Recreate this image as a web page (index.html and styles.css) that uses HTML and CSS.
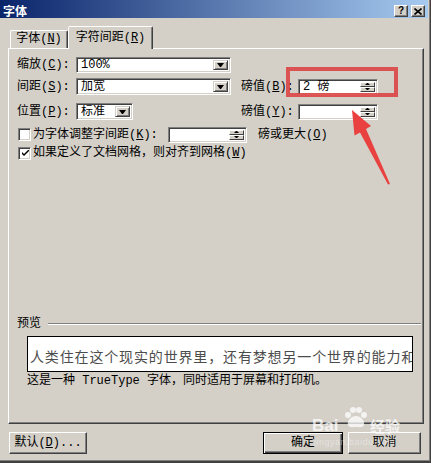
FILE: index.html
```html
<!DOCTYPE html>
<html lang="zh-CN">
<head>
  <meta charset="UTF-8" />
  <title>字体</title>
  <link rel="stylesheet" href="styles.css">
</head>
<body>
  <div class="dialog">
    <div class="titlebar">
      <span class="title">字体</span>
      <div class="caption-btns">
        <span class="cap-btn help">?</span>
        <span class="cap-btn close">
          <svg width="8" height="7" viewBox="0 0 8 7"><path d="M0.5 0.5 L7.5 6.5 M7.5 0.5 L0.5 6.5" stroke="#000" stroke-width="1.6"/></svg>
        </span>
      </div>
    </div>

    <div class="tabs">
      <div class="tab tab-font">字体(<u>N</u>)</div>
      <div class="tab active">字符间距(<u>R</u>)</div>
    </div>

    <div class="panel">
      <!-- scale -->
      <div class="row r1">
        <span class="lbl">缩放(<u>C</u>):</span>
        <div class="combo wide"><span class="val">100%</span><span class="drop"></span></div>
      </div>

      <!-- spacing -->
      <div class="row r2">
        <span class="lbl">间距(<u>S</u>):</span>
        <div class="cell">
          <div class="combo wide"><span class="val">加宽</span><span class="drop"></span></div>
        </div>
        <span class="lbl2">磅值(<u>B</u>):</span>
        <div class="spin"><span class="val">2 磅</span><span class="spin-btns"><span class="sb up"></span><span class="sb down"></span></span></div>
      </div>

      <!-- position -->
      <div class="row r3">
        <span class="lbl">位置(<u>P</u>):</span>
        <div class="cell">
          <div class="combo narrow"><span class="val">标准</span><span class="drop"></span></div>
        </div>
        <span class="lbl2">磅值(<u>Y</u>):</span>
        <div class="spin"><span class="val"></span><span class="spin-btns"><span class="sb up"></span><span class="sb down"></span></span></div>
      </div>

      <!-- kerning -->
      <div class="row r4">
        <span class="chk"></span>
        <span class="chk-lbl">为字体调整字间距(<u>K</u>):</span>
        <div class="spin small"><span class="val"></span><span class="spin-btns"><span class="sb up"></span><span class="sb down"></span></span></div>
        <span class="after">磅或更大(<u>O</u>)</span>
      </div>

      <!-- snap to grid -->
      <div class="row r5">
        <span class="chk checked">
          <svg width="7" height="7" viewBox="0 0 7 7"><path d="M0 2 L0 4 L2 6 L7 1 L7 -1 L2 4 Z" fill="#000"/></svg>
        </span>
        <span class="chk-lbl long">如果定义了文档网格，则对齐到网格(<u>W</u>)</span>
      </div>

      <div class="preview">
        <div class="legend">预览</div>
        <div class="pv-box">人类住在这个现实的世界里，还有梦想另一个世界的能力和</div>
        <div class="pv-desc">这是一种 TrueType 字体，同时适用于屏幕和打印机。</div>
      </div>
    </div>

    <div class="footer">
      <span class="btn btn-default">默认(<u>D</u>)...</span>
      <span class="btn btn-ok">确定</span>
      <span class="btn btn-cancel">取消</span>
    </div>

    <!-- annotation overlay -->
    <div class="redbox"></div>
    <svg class="arrow" width="431" height="463" viewBox="0 0 431 463">
      <polygon points="352,110 371,126 366,129 390,184 388,184.5 360,132.5 354.5,135.5" fill="#e8413f"/>
    </svg>

    <div class="watermark">
      <span class="wm-bai">Bai</span>
      <svg class="paw" width="24" height="22" viewBox="0 0 24 22">
        <circle cx="5" cy="8" r="3"/><circle cx="10" cy="3" r="3"/><circle cx="16" cy="3" r="3"/><circle cx="21" cy="8" r="3"/>
        <path d="M13 9 C7 9 4 15 5 18 C6 21 10 20 13 20 C16 20 20 21 21 18 C22 15 19 9 13 9 Z"/>
      </svg>
      <span class="wm-jy">经验</span>
      <span class="wm-url">jingyan.baidu.com</span>
    </div>
  </div>
</body>
</html>
```

FILE: styles.css
```css
:root {
  --face: #d4d0c8;
  --light: #ffffff;
  --shadow: #808080;
  --dark: #404040;
  --ui-font: "Liberation Mono", "Noto Sans CJK SC", monospace;
}
body {
  margin: 0;
  background: var(--face);
  font-family: var(--ui-font);
  font-size: 12px;
  line-height: 14px;
  color: #000;
}
u {
  text-decoration: underline;
  text-underline-offset: 1px;
}
.dialog {
  position: relative;
  width: 431px;
  height: 463px;
  box-sizing: border-box;
  padding-right: 2px;
  border-right: 1px solid var(--dark);
  border-bottom: 2px solid var(--dark);
  box-shadow: inset -1px -1px var(--shadow);
  overflow: hidden;
}

/* title bar */
.titlebar {
  height: 18px;
  box-sizing: border-box;
  padding: 5px 3px 1px 3px;
  display: flex;
  align-items: center;
  justify-content: space-between;
  background: linear-gradient(90deg, #0a246a, #a6caf0);
}
.title {
  color: #fff;
  font-family: "Noto Sans CJK SC", sans-serif;
  font-weight: 700;
  font-size: 12px;
  line-height: 12px;
}
.caption-btns {
  display: flex;
  gap: 3px;
}
.cap-btn {
  width: 14px;
  height: 12px;
  box-sizing: border-box;
  background: var(--face);
  border: 1px solid;
  border-color: var(--light) var(--dark) var(--dark) var(--light);
  box-shadow: inset -1px -1px var(--shadow);
  display: flex;
  align-items: center;
  justify-content: center;
  font-family: "Liberation Sans", sans-serif;
  font-weight: 700;
  font-size: 10px;
  line-height: 10px;
}

/* tabs */
.tabs {
  height: 22px;
  margin-top: 8px;
  padding-left: 10px;
  display: flex;
  align-items: flex-end;
}
.tab {
  height: 18px;
  box-sizing: border-box;
  border: 1px solid;
  border-bottom: none;
  border-color: var(--light) var(--dark) transparent var(--light);
  box-shadow: inset -1px 0 var(--shadow);
  border-radius: 2px 2px 0 0;
  text-align: center;
  line-height: 17px;
  white-space: nowrap;
}
.tab-font {
  width: 58px;
}
.tab.active {
  position: relative;
  z-index: 1;
  width: 85px;
  height: 23px;
  margin-bottom: -1px;
  padding-top: 3px;
  background: var(--face);
}

/* tab panel */
.panel {
  margin-left: 8px;
  width: 416px;
  height: 376px;
  box-sizing: border-box;
  border: 1px solid;
  border-color: var(--light) var(--dark) var(--dark) var(--light);
  box-shadow: inset -1px -1px var(--shadow);
  padding: 8px 2px 35px 8px;
  display: flex;
  flex-direction: column;
}
.row {
  display: flex;
  align-items: center;
  white-space: nowrap;
}
.r1 { height: 16px; }
.r2 { height: 17px; margin-top: 5px; }
.r3 { height: 17px; margin-top: 8px; }
.r4 { height: 17px; margin-top: 6px; }
.r5 { height: 14px; margin-top: 3px; }

.lbl {
  width: 59px;
  flex: none;
}
.cell {
  width: 165px;
  height: 100%;
  flex: none;
}
.lbl2 {
  width: 57px;
  flex: none;
}

/* combo boxes */
.combo {
  height: 100%;
  box-sizing: border-box;
  padding: 2px;
  display: flex;
  align-items: center;
  background: #fff;
  border: 1px solid;
  border-color: var(--shadow) var(--light) var(--light) var(--shadow);
  box-shadow: inset 1px 1px var(--dark), inset -1px -1px var(--face);
}
.combo.wide { width: 155px; }
.combo.narrow { width: 57px; }
.val {
  flex: 1;
  padding-left: 2px;
  overflow: hidden;
}
.drop {
  width: 15px;
  height: 100%;
  flex: none;
  box-sizing: border-box;
  background: var(--face);
  border: 1px solid;
  border-color: var(--face) var(--dark) var(--dark) var(--face);
  box-shadow: inset 1px 1px var(--light), inset -1px -1px var(--shadow);
  display: flex;
  align-items: center;
  justify-content: center;
}
.drop::after {
  content: "";
  width: 1px;
  height: 0;
  border-left: 3px solid transparent;
  border-right: 3px solid transparent;
  border-top: 4px solid #000;
}

/* spinners */
.spin {
  width: 80px;
  height: 16px;
  box-sizing: border-box;
  padding: 2px;
  display: flex;
  align-items: center;
  background: #fff;
  border: 1px solid;
  border-color: var(--shadow) var(--light) var(--light) var(--shadow);
  box-shadow: inset 1px 1px var(--dark), inset -1px -1px var(--face);
}
.spin.small {
  width: 79px;
}
.spin-btns {
  width: 15px;
  height: 100%;
  flex: none;
  display: flex;
  flex-direction: column;
}
.sb {
  flex: 1;
  box-sizing: border-box;
  background: var(--face);
  border: 1px solid;
  border-color: var(--light) var(--dark) var(--dark) var(--light);
  display: flex;
  align-items: center;
  justify-content: center;
}
.sb::after {
  content: "";
  width: 1px;
  height: 0;
  border-left: 2px solid transparent;
  border-right: 2px solid transparent;
}
.sb.up::after { border-bottom: 2px solid #000; }
.sb.down::after { border-top: 2px solid #000; }

/* checkboxes */
.chk {
  width: 13px;
  height: 13px;
  flex: none;
  margin: 0 2px 0 1px;
  box-sizing: border-box;
  background: #fff;
  border: 1px solid;
  border-color: var(--shadow) var(--light) var(--light) var(--shadow);
  box-shadow: inset 1px 1px var(--dark), inset -1px -1px var(--face);
  display: flex;
  align-items: center;
  justify-content: center;
}
.chk svg {
  margin: 1px 0 0 1px;
}
.chk-lbl {
  width: 135px;
  flex: none;
}
.chk-lbl.long {
  width: auto;
}
.after {
  margin-left: 11px;
}

/* preview */
.preview {
  margin-top: auto;
}
.legend {
  height: 14px;
  display: flex;
  align-items: center;
}
.legend::after {
  content: "";
  flex: 1;
  height: 0;
  margin-left: 7px;
  border-top: 1px solid var(--shadow);
  border-bottom: 1px solid var(--light);
}
.pv-box {
  margin: 5px 0 0 10px;
  width: 386px;
  height: 36px;
  box-sizing: border-box;
  padding: 3px 0 0 2px;
  display: flex;
  align-items: center;
  background: #fff;
  border: 1px solid #000;
  white-space: nowrap;
  overflow: hidden;
  font-family: "Noto Sans CJK SC", sans-serif;
  font-size: 14px;
  letter-spacing: 0.85px;
  color: #4c4c4c;
}
.pv-desc {
  margin: 2px 0 0 10px;
  height: 14px;
  white-space: nowrap;
}

/* buttons */
.footer {
  display: flex;
  padding: 8px 7px 0 9px;
}
.btn {
  height: 22px;
  box-sizing: border-box;
  background: var(--face);
  border: 1px solid;
  border-color: var(--light) var(--dark) var(--dark) var(--light);
  box-shadow: inset -1px -1px var(--shadow);
  display: flex;
  align-items: center;
  justify-content: center;
  white-space: nowrap;
}
.btn-default { width: 78px; }
.btn-ok {
  width: 80px;
  margin-left: auto;
  border-color: #000;
  box-shadow: inset 1px 1px var(--light), inset -1px -1px var(--dark), inset -2px -2px var(--shadow);
}
.btn-cancel {
  width: 73px;
  margin-left: 5px;
}

/* screenshot annotation */
.redbox {
  position: absolute;
  left: 286px;
  top: 67px;
  width: 112px;
  height: 30px;
  box-sizing: border-box;
  border: 4px solid rgba(218, 60, 60, 0.85);
}
.arrow {
  position: absolute;
  left: 0;
  top: 0;
  pointer-events: none;
}
.watermark {
  position: absolute;
  left: 312px;
  top: 407px;
  width: 100px;
  height: 46px;
  color: rgba(255, 255, 255, 0.75);
  fill: rgba(255, 255, 255, 0.75);
  pointer-events: none;
}
.wm-bai {
  position: absolute;
  left: 0;
  top: 10px;
  font-family: "Liberation Sans", sans-serif;
  font-weight: 700;
  font-size: 17px;
  line-height: 17px;
}
.paw {
  position: absolute;
  left: 31px;
  top: 0;
}
.wm-jy {
  position: absolute;
  left: 58px;
  top: 11px;
  font-family: "Noto Sans CJK SC", sans-serif;
  font-weight: 700;
  font-size: 15px;
  line-height: 16px;
}
.wm-url {
  position: absolute;
  left: 2px;
  top: 31px;
  font-family: "Liberation Sans", sans-serif;
  font-size: 9px;
  line-height: 9px;
  letter-spacing: 0.5px;
  color: rgba(255, 255, 255, 0.4);
}
```
